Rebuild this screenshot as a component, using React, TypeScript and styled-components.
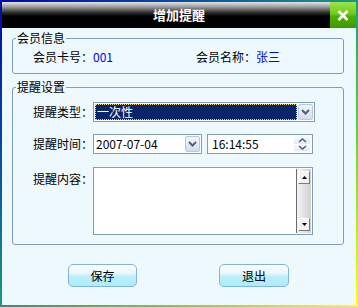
import React from 'react';
import styled, { createGlobalStyle } from 'styled-components';

const GlobalStyle = createGlobalStyle`
  html, body {
    margin: 0;
    padding: 0;
    background: #ffffff;
  }
  body {
    font-family: "Noto Sans CJK SC", "DejaVu Sans", sans-serif;
    font-size: 12px;
    color: #000;
  }
`;

const Window = styled.div`
  width: 358px;
  height: 307px;
  box-sizing: border-box;
  padding: 2px;
  display: flex;
  flex-direction: column;
  background: linear-gradient(to bottom right, #0008a8 0%, #0a5aa0 30%, #1a9a80 50%, #60cc40 70%, #ffff10 100%);
`;

const TitleBar = styled.div`
  height: 26px;
  display: grid;
  grid-template-columns: 26px 1fr 26px;
  align-items: center;
  background: linear-gradient(#e4e4e4 0%, #a0a0a0 18%, #303030 40%, #000 55%, #000 100%);
`;

const Title = styled.div`
  grid-column: 2;
  text-align: center;
  color: #fff;
  font-size: 13px;
  font-weight: bold;
  line-height: 26px;
`;

const CloseButton = styled.div`
  grid-column: 3;
  height: 26px;
  display: flex;
  align-items: center;
  justify-content: center;
  background: linear-gradient(#9ee34a 0%, #6fcc1c 45%, #4fb000 55%, #3c9a00 100%);
`;

const Body = styled.div`
  flex: 1;
  background: #eef9fe;
  display: flex;
  flex-direction: column;
`;

const Group = styled.fieldset<{ $top: number }>`
  margin: ${p => p.$top}px 12px 0 10px;
  padding: 0;
  border: 1px solid #7f9db9;
  border-radius: 3px;
  min-width: 0;
`;

const Legend = styled.legend`
  margin-left: 3px;
  padding: 0 1px;
  font-size: 12px;
  line-height: 14px;
`;

const InfoRow = styled.div`
  display: grid;
  grid-template-columns: 163px 1fr;
  padding: 2px 0 6px 20px;
  line-height: 20px;
`;

const Value = styled.span`
  color: #0000ff;
`;

const SettingsRows = styled.div`
  display: flex;
  flex-direction: column;
  gap: 12px;
  padding: 8px 0 9px 20px;
`;

const FieldRow = styled.div<{ $top?: boolean; $gap?: number }>`
  display: flex;
  align-items: ${p => (p.$top ? 'flex-start' : 'center')};
  gap: 5px;
  margin-top: ${p => p.$gap ?? 0}px;
`;

const Label = styled.div<{ $pad?: number }>`
  width: 60px;
  margin-right: -5px;
  line-height: 20px;
  padding-top: ${p => p.$pad ?? 0}px;
`;

const Box = styled.div<{ $w: number; $h?: number }>`
  width: ${p => p.$w}px;
  height: ${p => p.$h ?? 20}px;
  box-sizing: border-box;
  border: 1px solid #7f9db9;
  background: #fff;
  display: flex;
  align-items: stretch;
`;

const SelectValue = styled.div`
  flex: 1;
  margin: 1px 0 1px 1px;
  background: #0a246a;
  color: #fff;
  outline: 1px dotted #f5d878;
  outline-offset: -1px;
  padding-left: 2px;
  line-height: 16px;
`;

const InputText = styled.div<{ $indent?: number }>`
  flex: 1;
  padding-left: ${p => p.$indent ?? 2}px;
  line-height: 18px;
`;

const DropButton = styled.div`
  width: 15px;
  margin: 1px;
  box-sizing: border-box;
  border: 1px solid #b8c6df;
  border-radius: 2px;
  background: linear-gradient(#f2f5fb, #d3dcf0);
  display: flex;
  align-items: center;
  justify-content: center;
`;

const Spinner = styled.div`
  width: 16px;
  margin: 2px 2px 2px 0;
  display: flex;
  flex-direction: column;
  gap: 1px;
`;

const SpinPart = styled.div`
  flex: 1;
  background: linear-gradient(#f7f9fc, #e3e9f4);
  display: flex;
  align-items: center;
  justify-content: center;
`;

const MemoText = styled.div`
  flex: 1;
`;

const Scrollbar = styled.div`
  width: 15px;
  margin: 1px 1px 1px 0;
  box-sizing: border-box;
  border-left: 1px solid #6b6b6b;
  background: linear-gradient(to right, #f4f4f4, #cfcfcf);
  display: flex;
  flex-direction: column;
  justify-content: space-between;
  padding: 2px 1px;
`;

const ScrollButton = styled.div`
  height: 13px;
  box-sizing: border-box;
  border: 1px solid;
  border-color: #fff #7a7a7a #7a7a7a #fff;
  background: #f2f2f2;
  display: flex;
  align-items: center;
  justify-content: center;
`;

const ButtonRow = styled.div`
  display: flex;
  gap: 82px;
  margin-top: 19px;
  padding-left: 66px;
`;

const ActionButton = styled.div<{ $w: number }>`
  width: ${p => p.$w}px;
  height: 23px;
  box-sizing: border-box;
  border: 1px solid #80b4d8;
  border-radius: 5px;
  background: linear-gradient(#fdfeff 0%, #e8f7fc 40%, #bdeef9 55%, #a9eefc 100%);
  display: flex;
  align-items: center;
  justify-content: center;
  font-size: 12px;
`;

const Chevron = () => (
  <svg width="9" height="6" viewBox="0 0 9 6">
    <path d="M1 1 L4.5 4.5 L8 1" fill="none" stroke="#4d6185" strokeWidth="2" />
  </svg>
);

const SmallChevron = ({ up }: { up?: boolean }) => (
  <svg width="9" height="5" viewBox="0 0 9 5">
    <path d={up ? 'M1 4 L4.5 1 L8 4' : 'M1 1 L4.5 4 L8 1'} fill="none" stroke="#4d6185" strokeWidth="1.6" />
  </svg>
);

const Triangle = ({ up }: { up?: boolean }) => (
  <svg width="5" height="3" viewBox="0 0 5 3">
    <path d={up ? 'M0 3 L2.5 0 L5 3 Z' : 'M0 0 L2.5 3 L5 0 Z'} fill="#000" />
  </svg>
);

const App: React.FC = () => (
  <>
    <GlobalStyle />
    <Window>
      <TitleBar>
        <Title>增加提醒</Title>
        <CloseButton>
          <svg width="12" height="11" viewBox="0 0 12 11">
            <path d="M1.5 1 L10.5 10 M10.5 1 L1.5 10" stroke="#fff" strokeWidth="2.6" />
          </svg>
        </CloseButton>
      </TitleBar>
      <Body>
        <Group $top={3}>
          <Legend>会员信息</Legend>
          <InfoRow>
            <span>会员卡号：<Value>001</Value></span>
            <span>会员名称：<Value>张三</Value></span>
          </InfoRow>
        </Group>

        <Group $top={6}>
          <Legend>提醒设置</Legend>
          <SettingsRows>
            <FieldRow>
              <Label>提醒类型：</Label>
              <Box $w={222}>
                <SelectValue>一次性</SelectValue>
                <DropButton><Chevron /></DropButton>
              </Box>
            </FieldRow>
            <FieldRow>
              <Label>提醒时间：</Label>
              <Box $w={109}>
                <InputText>2007-07-04</InputText>
                <DropButton><Chevron /></DropButton>
              </Box>
              <Box $w={106}>
                <InputText $indent={4}>16:14:55</InputText>
                <Spinner>
                  <SpinPart><SmallChevron up /></SpinPart>
                  <SpinPart><SmallChevron /></SpinPart>
                </Spinner>
              </Box>
            </FieldRow>
            <FieldRow $top $gap={1}>
              <Label $pad={2}>提醒内容：</Label>
              <Box $w={220} $h={68}>
                <MemoText />
                <Scrollbar>
                  <ScrollButton><Triangle up /></ScrollButton>
                  <ScrollButton><Triangle /></ScrollButton>
                </Scrollbar>
              </Box>
            </FieldRow>
          </SettingsRows>
        </Group>

        <ButtonRow>
          <ActionButton $w={69}>保存</ActionButton>
          <ActionButton $w={70}>退出</ActionButton>
        </ButtonRow>
      </Body>
    </Window>
  </>
);

export default App;
